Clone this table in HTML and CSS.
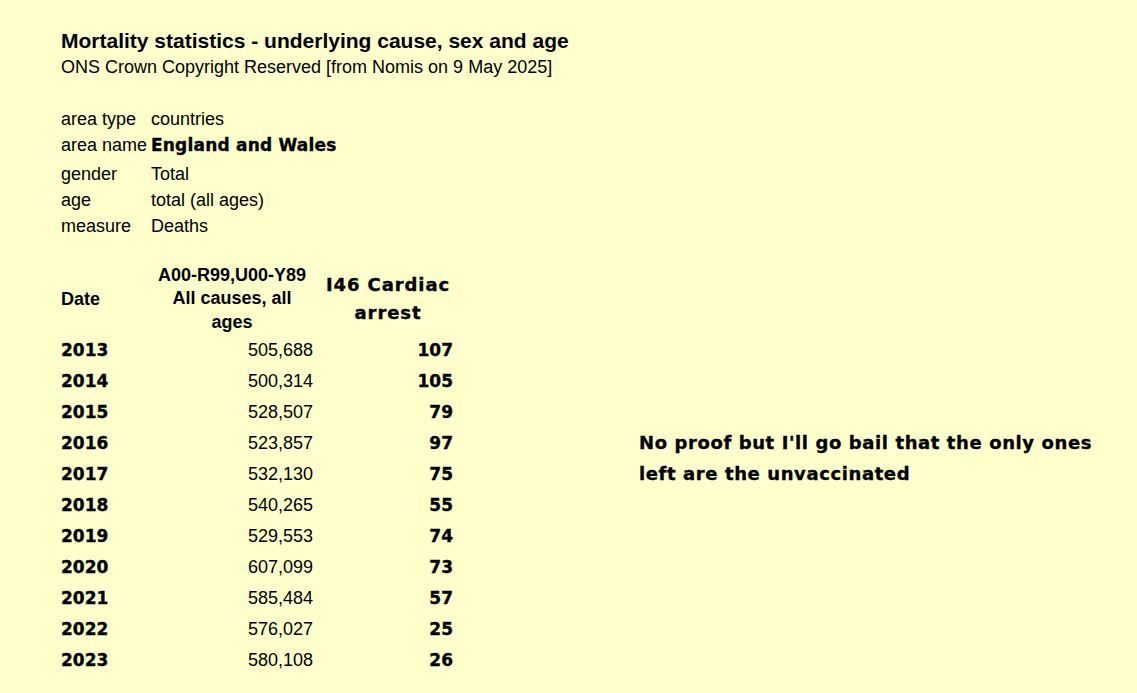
FILE: index.html
```html
<!DOCTYPE html>
<html lang="en">
<head>
<meta charset="utf-8">
<title>Mortality statistics</title>
<link rel="stylesheet" href="styles.css">
</head>
<body>
<div class="page">
  <h1 class="title">Mortality statistics - underlying cause, sex and age</h1>
  <p class="subtitle">ONS Crown Copyright Reserved [from Nomis on 9 May 2025]</p>

  <div class="meta">
    <div class="meta-row"><span class="meta-label">area type</span><span class="meta-value">countries</span></div>
    <div class="meta-row meta-row-strong"><span class="meta-label">area name</span><span class="meta-value heavy">England and Wales</span></div>
    <div class="meta-row"><span class="meta-label">gender</span><span class="meta-value">Total</span></div>
    <div class="meta-row"><span class="meta-label">age</span><span class="meta-value">total (all ages)</span></div>
    <div class="meta-row"><span class="meta-label">measure</span><span class="meta-value">Deaths</span></div>
  </div>

  <div class="data-area">
    <div class="table">
      <div class="th th-date">Date</div>
      <div class="th th-all">A00-R99,U00-Y89<br>All causes, all<br>ages</div>
      <div class="th th-cardiac heavy">I46 Cardiac<br>arrest</div>

      <div class="td year heavy">2013</div><div class="td num">505,688</div><div class="td num heavy">107</div>
      <div class="td year heavy">2014</div><div class="td num">500,314</div><div class="td num heavy">105</div>
      <div class="td year heavy">2015</div><div class="td num">528,507</div><div class="td num heavy">79</div>
      <div class="td year heavy">2016</div><div class="td num">523,857</div><div class="td num heavy">97</div>
      <div class="td year heavy">2017</div><div class="td num">532,130</div><div class="td num heavy">75</div>
      <div class="td year heavy">2018</div><div class="td num">540,265</div><div class="td num heavy">55</div>
      <div class="td year heavy">2019</div><div class="td num">529,553</div><div class="td num heavy">74</div>
      <div class="td year heavy">2020</div><div class="td num">607,099</div><div class="td num heavy">73</div>
      <div class="td year heavy">2021</div><div class="td num">585,484</div><div class="td num heavy">57</div>
      <div class="td year heavy">2022</div><div class="td num">576,027</div><div class="td num heavy">25</div>
      <div class="td year heavy">2023</div><div class="td num">580,108</div><div class="td num heavy">26</div>
    </div>

    <p class="note heavy">No proof but I'll go bail that the only ones<br>left are the unvaccinated</p>
  </div>
</div>
</body>
</html>
```

FILE: styles.css
```css
html, body {
  margin: 0;
  padding: 0;
  background: #ffffcc;
}

body {
  font-family: "Liberation Sans", Arial, sans-serif;
  color: #000;
  font-size: 18px;
}

.page {
  padding: 28px 0 0 61px;
}

.heavy {
  font-family: "DejaVu Sans", "Liberation Sans", sans-serif;
  font-weight: 700;
  -webkit-text-stroke: 0.35px #000;
}

.title {
  margin: 0;
  font-size: 21px;
  line-height: 26px;
  font-weight: 700;
}

.subtitle {
  margin: 3px 0 0;
  font-size: 18px;
  line-height: 20px;
}

.meta {
  margin-top: 29px;
  display: flex;
  flex-direction: column;
}

.meta-row {
  display: grid;
  grid-template-columns: 90px auto;
  height: 26px;
  line-height: 26px;
}

.meta-row-strong {
  height: 29px;
}

.meta-value.heavy {
  font-size: 17px;
  letter-spacing: 0.2px;
}

.data-area {
  margin-top: 24px;
  display: flex;
  align-items: flex-start;
}

.table {
  display: grid;
  grid-template-columns: 90px 162px 140px;
  grid-template-rows: 72px;
  grid-auto-rows: 31px;
}

.th {
  display: flex;
  align-items: center;
  font-weight: 700;
}

.th-all {
  justify-content: center;
  text-align: center;
  line-height: 23.5px;
}

.th-cardiac {
  justify-content: center;
  text-align: center;
  padding-left: 10px;
  font-size: 18px;
  line-height: 28px;
  letter-spacing: 0.9px;
}

.td {
  line-height: 31px;
  white-space: nowrap;
}

.year {
  font-size: 17px;
}

.num {
  text-align: right;
}

.num.heavy {
  font-size: 17px;
}

.note {
  margin: 164px 0 0 186px;
  font-size: 18px;
  line-height: 31px;
  letter-spacing: 0.6px;
  white-space: nowrap;
}
```
